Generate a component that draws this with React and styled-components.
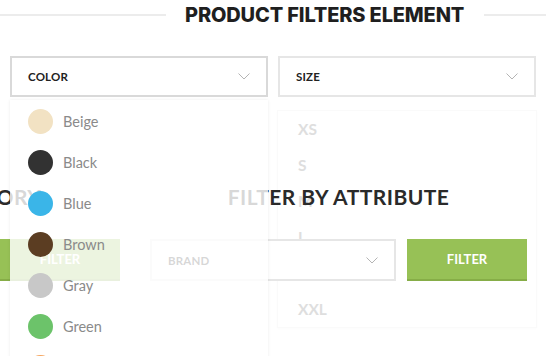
import React from "react";
import styled, { createGlobalStyle } from "styled-components";

const Global = createGlobalStyle`
  html, body { margin: 0; padding: 0; background: #fff; }
  body { width: 546px; height: 356px; overflow: hidden; font-family: Lato, "Open Sans", sans-serif; }
  * { box-sizing: border-box; }
`;

const Page = styled.div`
  width: 546px;
  height: 356px;
  position: relative;
`;

const TitleRow = styled.div`
  display: flex;
  align-items: center;
  height: 30px;
`;

const Rule = styled.div`
  height: 2px;
  background: #ececec;
  flex: ${(p) => (p.$w ? `0 0 ${p.$w}` : "1 1 auto")};
`;

const Title = styled.h2`
  margin: 0 20px 0 19px;
  font-family: Inter, "Open Sans", sans-serif;
  font-weight: 800;
  font-size: 20px;
  line-height: 30px;
  color: #1f1f1f;
  letter-spacing: -0.15px;
  white-space: nowrap;
`;

const SelectRow = styled.div`
  display: flex;
  gap: 10px;
  padding-left: 10px;
  margin-top: 26px;
`;

const SelectWrap = styled.div`
  position: relative;
  width: 258px;
`;

const SelectBox = styled.div`
  display: flex;
  align-items: center;
  justify-content: space-between;
  height: ${(p) => p.$h || "41px"};
  width: ${(p) => p.$w || "100%"};
  padding: 0 16px 0 16px;
  border: 2px solid ${(p) => (p.$active ? "#d9d9d9" : "#e6e6e6")};
  background: #fff;
  font-family: Lato, sans-serif;
  font-weight: 700;
  font-size: 11.5px;
  color: #222;
  letter-spacing: 0.2px;
  flex: none;
`;

const Chevron = () => (
  <svg width="12" height="7" viewBox="0 0 12 7">
    <polyline points="0.5,0.5 6,6 11.5,0.5" fill="none" stroke="#b4b4b4" strokeWidth="1" />
  </svg>
);

const ColorMenu = styled.ul`
  position: absolute;
  z-index: 5;
  top: 44px;
  left: 0;
  width: 258px;
  margin: 0;
  padding: 0;
  list-style: none;
  background: rgba(255, 255, 255, 0.82);
  box-shadow: 0 0 3px rgba(0, 0, 0, 0.08);
  height: 330px;
`;

const ColorItem = styled.li`
  display: flex;
  align-items: center;
  gap: 10px;
  height: 41px;
  padding-left: 18px;
  padding-top: 1px;
  font-family: Lato, sans-serif;
  font-size: 14.5px;
  color: #8a8a8a;
`;

const Swatch = styled.span`
  width: 25px;
  height: 25px;
  border-radius: 50%;
  background: ${(p) => p.$c};
  flex: none;
`;

const SizeMenu = styled.ul`
  position: absolute;
  z-index: 1;
  top: 54px;
  left: -1px;
  width: 260px;
  margin: 0;
  padding: 0;
  list-style: none;
  background: #fff;
  border: 1px solid #fafafa;
  box-shadow: 0 1px 2px rgba(0, 0, 0, 0.015);
`;

const SizeItem = styled.li`
  height: 36px;
  display: flex;
  align-items: center;
  padding-left: 20px;
  font-family: Lato, sans-serif;
  font-weight: 700;
  font-size: 15.5px;
  color: #dedede;
`;

const Columns = styled.div`
  position: relative;
  z-index: 2;
  display: flex;
  gap: 30px;
  margin-top: 88px;
  margin-left: -257px;
`;

const Column = styled.div`
  width: 377px;
  display: flex;
  flex-direction: column;
  align-items: center;
`;

const Heading = styled.h3`
  margin: 0 0 30px;
  font-family: Lato, sans-serif;
  font-weight: 700;
  font-size: 21px;
  line-height: 24px;
  letter-spacing: 0.45px;
  color: #2a2a2a;
  white-space: nowrap;
`;

const FormRow = styled.div`
  display: flex;
  gap: 11px;
  width: 100%;
`;

const FilterButton = styled.button`
  width: 120px;
  height: 42px;
  border: 0;
  border-bottom: 2px solid #86ad47;
  background: #97c156;
  color: #fff;
  font-family: Lato, sans-serif;
  font-weight: 700;
  font-size: 13px;
  padding: 0;
  flex: none;
`;

const colors = [
  ["Beige", "#f2e2c3"],
  ["Black", "#323232"],
  ["Blue", "#3ab5e8"],
  ["Brown", "#5b3d22"],
  ["Gray", "#c8c8c8"],
  ["Green", "#6cc36a"],
  ["Orange", "#f6a55e"],
  ["Pink", "#f5a5c4"],
];

const sizes = ["XS", "S", "M", "L", "XL", "XXL"];

export default function App() {
  return (
    <>
      <Global />
      <Page>
        <TitleRow>
          <Rule $w="166px" />
          <Title>PRODUCT FILTERS ELEMENT</Title>
          <Rule />
        </TitleRow>
        <SelectRow>
          <SelectWrap>
            <SelectBox $active>
              COLOR
              <Chevron />
            </SelectBox>
            <ColorMenu>
              {colors.map(([name, c]) => (
                <ColorItem key={name}>
                  <Swatch $c={c} />
                  {name}
                </ColorItem>
              ))}
            </ColorMenu>
          </SelectWrap>
          <SelectWrap>
            <SelectBox>
              SIZE
              <Chevron />
            </SelectBox>
            <SizeMenu>
              {sizes.map((s) => (
                <SizeItem key={s}>{s}</SizeItem>
              ))}
            </SizeMenu>
          </SelectWrap>
        </SelectRow>
        <Columns>
          <Column>
            <Heading>FILTER BY CATEGORY</Heading>
            <FormRow>
              <SelectBox $w="246px" $h="42px">
                CATEGORY
                <Chevron />
              </SelectBox>
              <FilterButton>FILTER</FilterButton>
            </FormRow>
          </Column>
          <Column>
            <Heading>FILTER BY ATTRIBUTE</Heading>
            <FormRow>
              <SelectBox $w="246px" $h="42px">
                BRAND
                <Chevron />
              </SelectBox>
              <FilterButton>FILTER</FilterButton>
            </FormRow>
          </Column>
        </Columns>
      </Page>
    </>
  );
}
